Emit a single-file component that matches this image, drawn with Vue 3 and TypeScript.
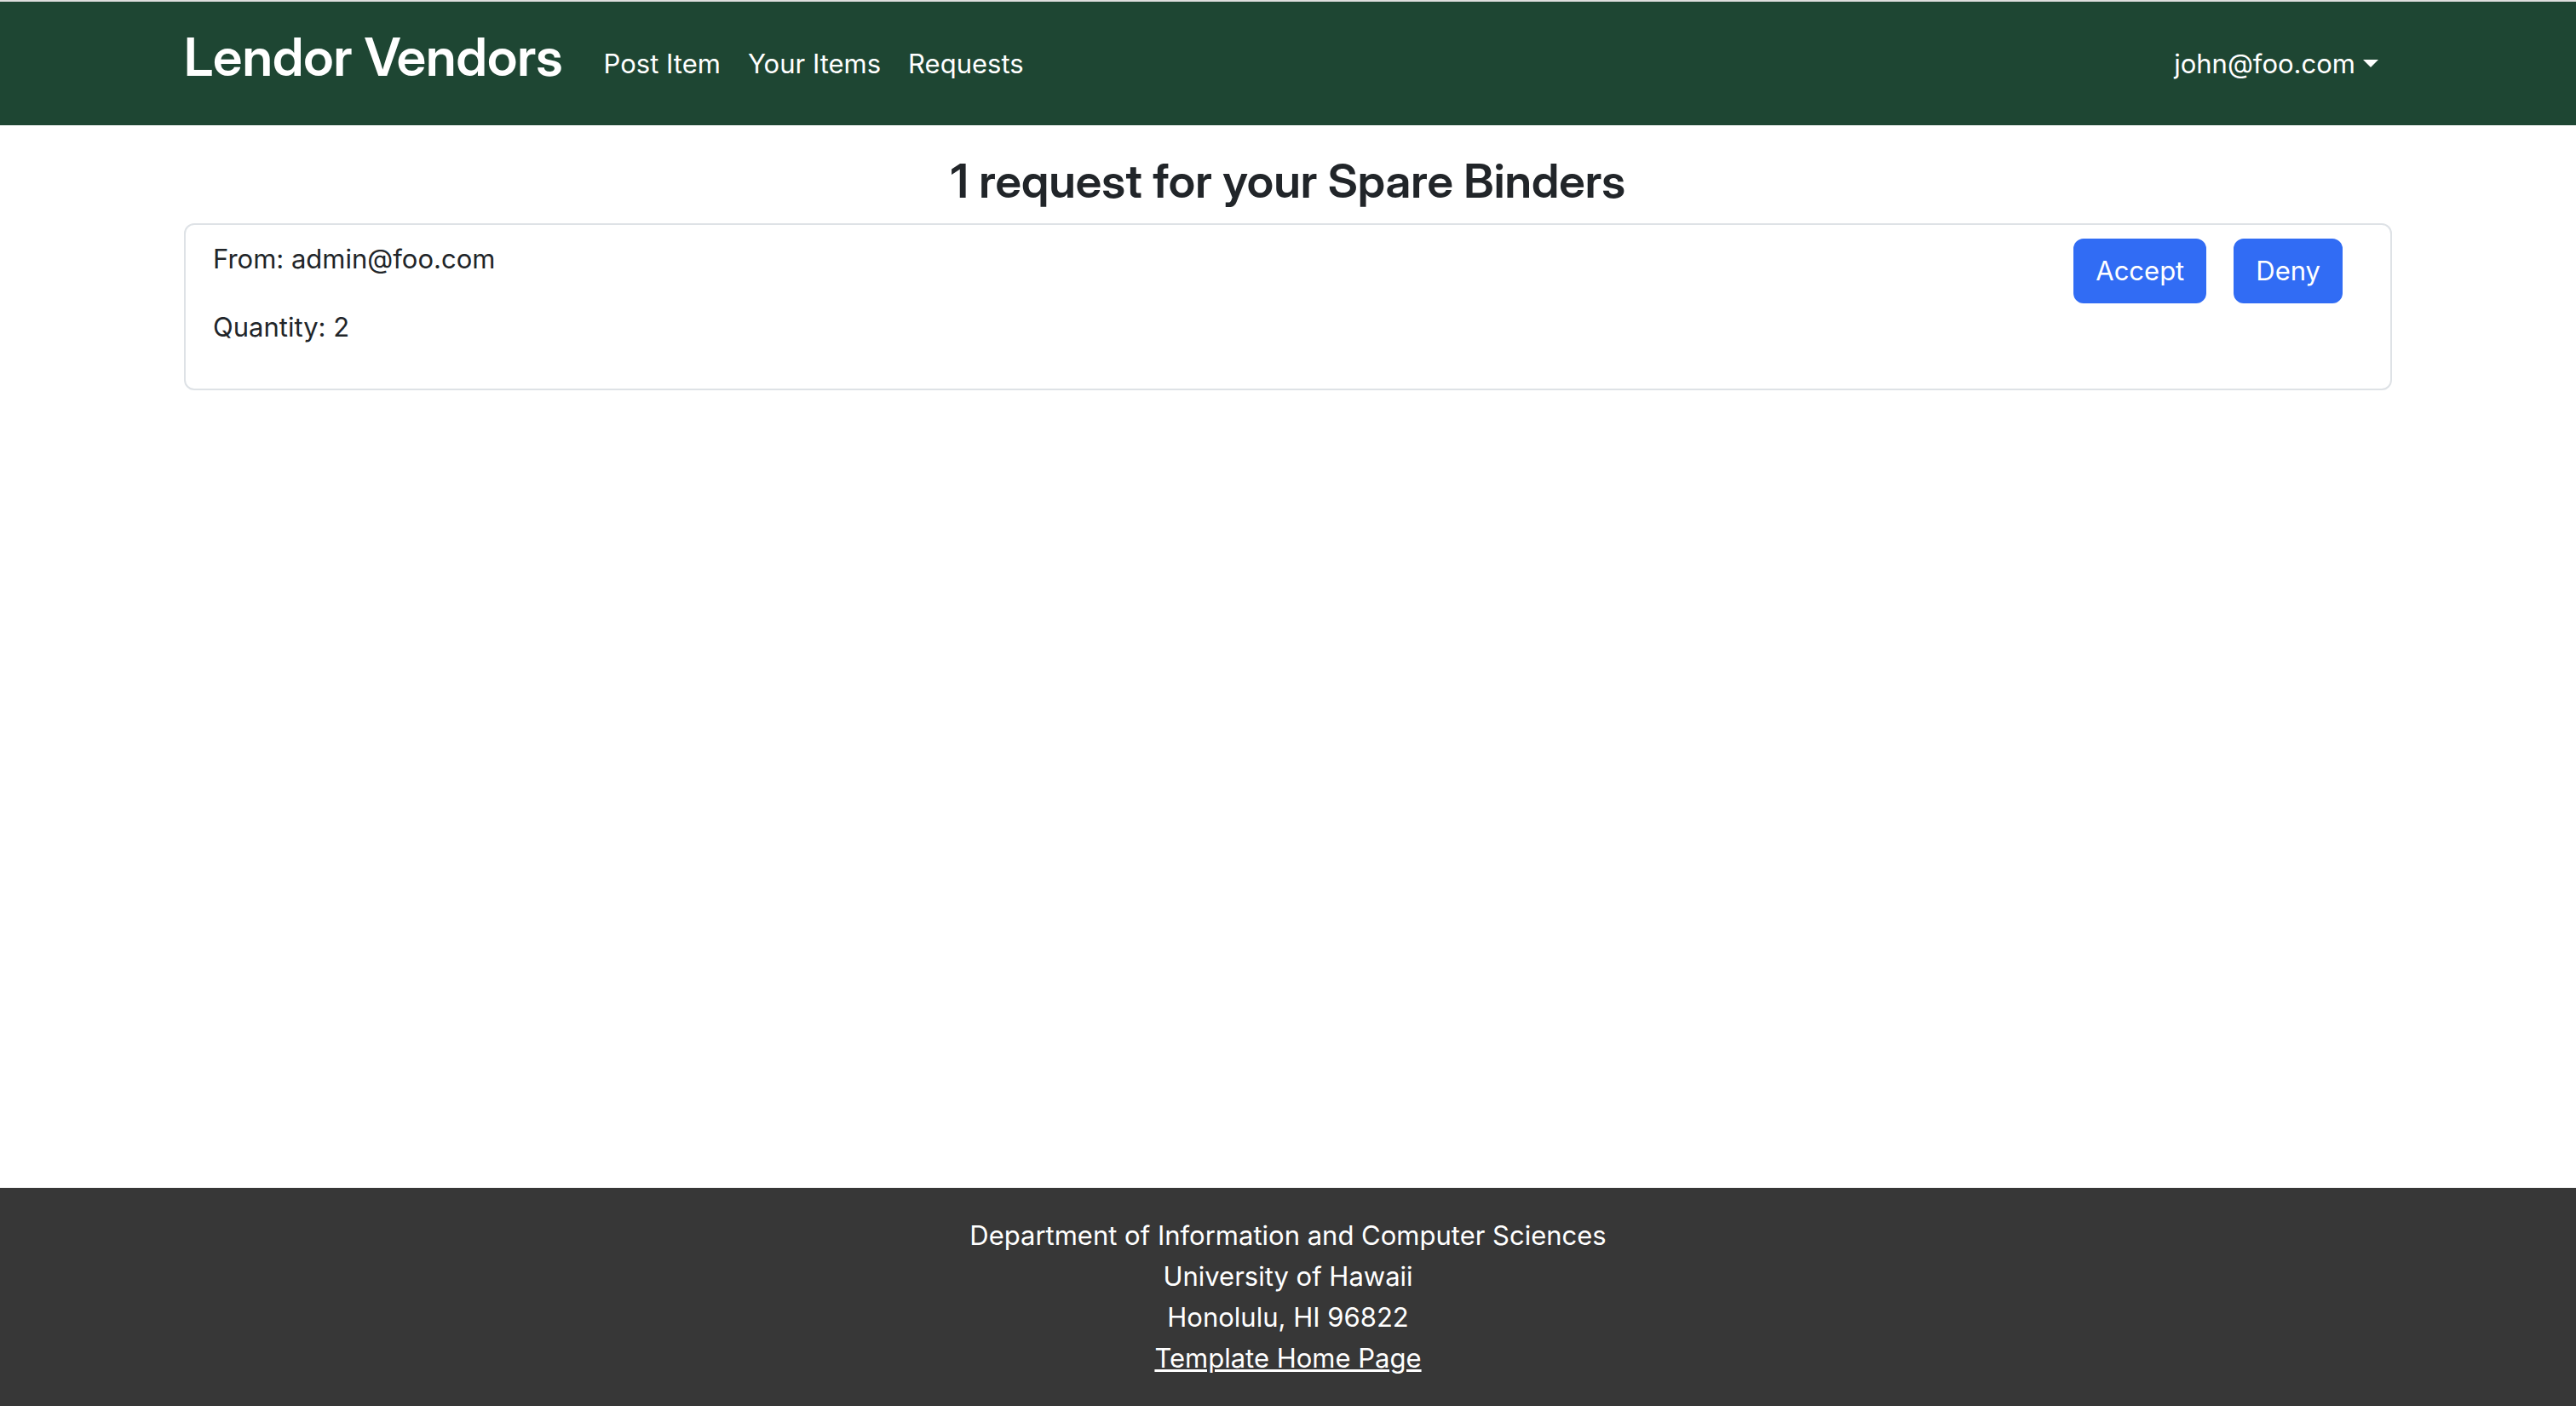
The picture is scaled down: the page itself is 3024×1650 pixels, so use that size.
<script setup lang="ts">
interface NavLink {
  label: string
  href: string
}

interface ItemRequest {
  from: string
  quantity: number
}

const links: NavLink[] = [
  { label: 'Post Item', href: '#post' },
  { label: 'Your Items', href: '#items' },
  { label: 'Requests', href: '#requests' },
]

const user = 'john@foo.com'
const itemName = 'Spare Binders'
const requests: ItemRequest[] = [{ from: 'admin@foo.com', quantity: 2 }]
</script>

<template>
  <div class="page">
    <header class="navbar">
      <div class="container bar">
        <a class="brand" href="#home"><h1>Lendor Vendors</h1></a>
        <nav class="links">
          <a v-for="link in links" :key="link.label" class="nav-link" :href="link.href">{{ link.label }}</a>
        </nav>
        <button class="nav-link user" type="button" aria-haspopup="true">
          {{ user }}<span class="caret"></span>
        </button>
      </div>
    </header>

    <main class="container content">
      <h2>{{ requests.length }} request for your {{ itemName }}</h2>
      <article v-for="request in requests" :key="request.from" class="card">
        <div class="details">
          <p>From: {{ request.from }}</p>
          <p>Quantity: {{ request.quantity }}</p>
        </div>
        <div class="actions">
          <button class="btn" type="button">Accept</button>
          <button class="btn" type="button">Deny</button>
        </div>
      </article>
    </main>

    <footer class="footer">
      <div>Department of Information and Computer Sciences</div>
      <div>University of Hawaii</div>
      <div>Honolulu, HI 96822</div>
      <a href="#template">Template Home Page</a>
    </footer>
  </div>
</template>

<style>
body {
  margin: 0;
  background: #fff;
}
</style>

<style scoped>
.page {
  display: flex;
  flex-direction: column;
  box-sizing: border-box;
  min-height: 100vh;
  border-top: 2px solid #dedede;
  font-family: Inter, "Liberation Sans", sans-serif;
  font-size: 31px;
  line-height: 48px;
  color: #212529;
}

.container {
  box-sizing: border-box;
  width: 100%;
  max-width: 2640px;
  margin: 0 auto;
  padding: 0 24px;
}

.navbar {
  padding: 16px 0;
  background: #1e4633;
}

.bar {
  display: flex;
  align-items: center;
}

.brand {
  margin-right: 32px;
  padding: 10px 0;
  color: #fff;
  text-decoration: none;
}

h1,
h2 {
  font-family: "Inter Display", Inter, "Liberation Sans", sans-serif;
  font-weight: 600;
}

.brand h1 {
  margin: 0 0 16px;
  font-size: 62px;
  line-height: 77px;
}

.links {
  display: flex;
  flex: 1;
}

.nav-link {
  padding: 16px;
  color: #fff;
  text-decoration: none;
}

.user {
  display: flex;
  align-items: center;
  gap: 9px;
  border: 0;
  background: none;
  font: inherit;
  cursor: pointer;
}

.caret {
  border-top: 9px solid #fff;
  border-right: 9px solid transparent;
  border-left: 9px solid transparent;
}

.content {
  flex: 1;
  padding-top: 32px;
}

h2 {
  margin: 0 0 16px;
  font-size: 55px;
  line-height: 67px;
  text-align: center;
}

.card {
  display: flex;
  justify-content: space-between;
  align-items: flex-start;
  padding: 16px 32px;
  border: 2px solid #dee2e6;
  border-radius: 12px;
}

.details p {
  margin: 0 0 32px;
}

.actions {
  display: flex;
  gap: 32px;
  padding-right: 24px;
}

.btn {
  padding: 12px 24px;
  border: 2px solid #316cf4;
  border-radius: 12px;
  background: #316cf4;
  color: #fff;
  font: inherit;
  cursor: pointer;
}

.footer {
  padding: 32px 0;
  background: #373737;
  color: #fff;
  text-align: center;
}

.footer a {
  color: #fff;
}
</style>
